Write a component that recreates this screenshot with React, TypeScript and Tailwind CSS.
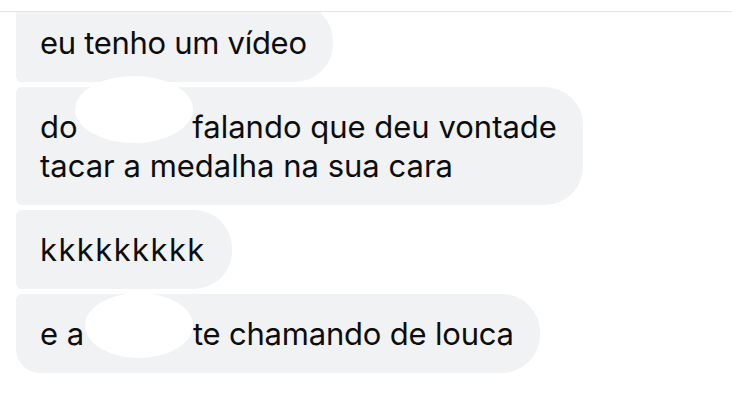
import React from "react";

// white blob used to hide a name in the screenshot
function Blot({ className }: { className: string }) {
  return <div className={`absolute bg-white rounded-[50%] ${className}`} />;
}

function Bubble({ children, className = "" }: { children: React.ReactNode; className?: string }) {
  return (
    <div
      className={`w-fit bg-[#f1f2f4] pl-[24px] pr-[26px] py-[20px] text-[31px] leading-[39px] text-[#0d0d0d] rounded-l-[6px] rounded-r-[38px] ${className}`}
    >
      {children}
    </div>
  );
}

export default function App() {
  return (
    <div className="w-[732px] h-[411px] bg-white overflow-hidden font-['Inter',sans-serif]">
      <div className="h-[12px] border-b border-[#e6e6e8]" />
      <div className="relative px-[16px] flex flex-col gap-[5px] overflow-hidden">
        <Bubble className="-mt-[9px]">
          <span className="tracking-[-0.3px]">eu tenho um vídeo</span>
        </Bubble>
        <Bubble>
          do <span className="inline-block w-[106px]" />falando que deu vontade
          <br />
          tacar a medalha na sua cara
        </Bubble>
        <Bubble>
          <span className="tracking-[1.4px]">kkkkkkkkk</span>
        </Bubble>
        <Bubble className="rounded-bl-[24px]">
          e a <span className="inline-block w-[100px]" />
          <span className="tracking-[-0.2px]">te chamando de louca</span>
        </Bubble>
        <Blot className="left-[75px] top-[64px] w-[118px] h-[67px]" />
        <Blot className="left-[85px] top-[281px] w-[108px] h-[65px]" />
      </div>
    </div>
  );
}
